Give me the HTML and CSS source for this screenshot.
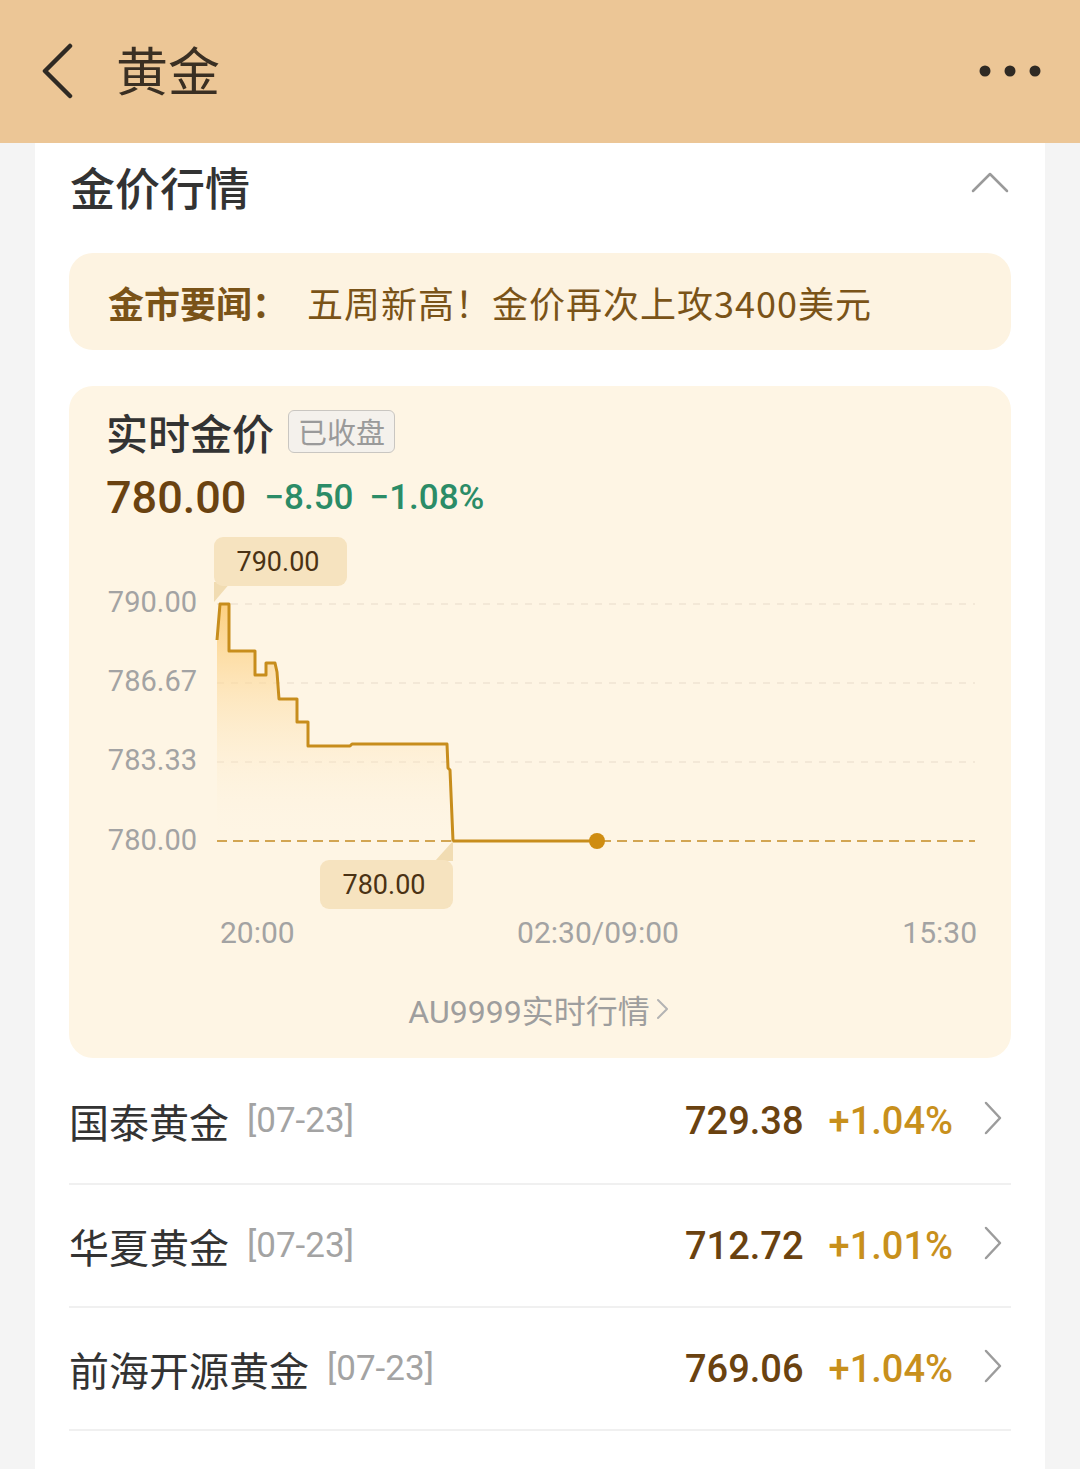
FILE: index.html
```html
<!DOCTYPE html>
<html lang="zh-CN">

<head>
    <meta charset="UTF-8">
    <meta name="viewport" content="width=device-width, initial-scale=1.0">
    <title>黄金</title>

    <link rel="stylesheet" href="styles.css">
</head>

<body>

    <header class="topbar">
        <svg class="back" width="34" height="56" viewBox="0 0 34 56">
            <path d="M30 3 L5 28 L30 53" fill="none" stroke="#2f2a24" stroke-width="4.5" stroke-linecap="round" stroke-linejoin="round" />
        </svg>
        <h1 class="page-title">黄金</h1>
        <svg class="more" width="62" height="14" viewBox="0 0 62 14">
            <circle cx="6" cy="7" r="5.5" fill="#2f2a24" />
            <circle cx="31" cy="7" r="5.5" fill="#2f2a24" />
            <circle cx="56" cy="7" r="5.5" fill="#2f2a24" />
        </svg>
    </header>

    <main class="panel">
        <div class="section-head">
            <h2 class="section-title">金价行情</h2>
            <svg class="fold" width="38" height="24" viewBox="0 0 38 24">
                <path d="M2 21 L19 4 L36 21" fill="none" stroke="#9a9a9a" stroke-width="2.5" stroke-linecap="round" stroke-linejoin="round" />
            </svg>
        </div>

        <div class="news">
            <span class="news-tag">金市要闻：</span>
            <span class="news-text">五周新高！金价再次上攻3400美元</span>
        </div>

        <div class="quote-card">
            <div class="quote-head">
                <span class="quote-title">实时金价</span>
                <span class="badge">已收盘</span>
            </div>
            <div class="quote-price">
                <span class="price">780.00</span>
                <span class="change">−8.50</span>
                <span class="change">−1.08%</span>
            </div>

            <svg class="chart" width="942" height="430" viewBox="0 0 942 430">
                <defs>
                    <linearGradient id="area" x1="0" y1="0" x2="0" y2="1">
                        <stop offset="0" stop-color="#fcc96f" stop-opacity="0.85" />
                        <stop offset="1" stop-color="#fef5e5" stop-opacity="0" />
                    </linearGradient>
                </defs>

                <!-- grid -->
                <g stroke="#efe4d2" stroke-width="1.5" stroke-dasharray="7 7">
                    <line x1="148" y1="74" x2="906" y2="74" />
                    <line x1="148" y1="153" x2="906" y2="153" />
                    <line x1="148" y1="232" x2="906" y2="232" />
                </g>
                <line x1="148" y1="311" x2="906" y2="311" stroke="#d2a552" stroke-width="2" stroke-dasharray="10 6" />

                <g class="axis-y" text-anchor="end">
                    <text x="128" y="82">790.00</text>
                    <text x="128" y="161">786.67</text>
                    <text x="128" y="240">783.33</text>
                    <text x="128" y="320">780.00</text>
                </g>

                <path d="M148,311 L148,110 L151,74 L160,74 L160,121 L186,121 L186,145 L197,145 L197,133 L206,133 L208,142 L210,169 L228,169 L228,192 L239,192 L239,216 L281,216 L283,214 L378,214 L379,238 L381,240 L384,311 Z" fill="url(#area)" />
                <path d="M148,110 L151,74 L160,74 L160,121 L186,121 L186,145 L197,145 L197,133 L206,133 L208,142 L210,169 L228,169 L228,192 L239,192 L239,216 L281,216 L283,214 L378,214 L379,238 L381,240 L384,311 L528,311" fill="none" stroke="#c78d1c" stroke-width="3" stroke-linejoin="round" />
                <circle cx="528" cy="311" r="8" fill="#cf8d12" />

                <!-- max / min tips -->
                <polygon points="145,52 162,52 145,72" fill="#f1dcb2" />
                <rect x="145" y="7" width="133" height="49" rx="9" fill="#f6e3bf" />
                <text class="tip" x="209" y="41" text-anchor="middle">790.00</text>

                <polygon points="384,311 384,331 366,331" fill="#f1dcb2" />
                <rect x="251" y="330" width="133" height="49" rx="9" fill="#f6e3bf" />
                <text class="tip" x="315" y="364" text-anchor="middle">780.00</text>

                <g class="axis-x">
                    <text x="151" y="413">20:00</text>
                    <text x="529" y="413" text-anchor="middle">02:30/09:00</text>
                    <text x="908" y="413" text-anchor="end">15:30</text>
                </g>
            </svg>

            <div class="quote-link">
                AU9999实时行情
                <svg width="14" height="24" viewBox="0 0 14 24">
                    <path d="M2 3 L11 12 L2 21" fill="none" stroke="#b3b3b3" stroke-width="2" stroke-linecap="round" stroke-linejoin="round" />
                </svg>
            </div>
        </div>

        <ul class="fund-list">
            <li class="fund">
                <span class="fund-name">国泰黄金</span>
                <span class="fund-date">[07-23]</span>
                <span class="fund-price">729.38</span>
                <span class="fund-rate">+1.04%</span>
                <svg class="arrow" width="20" height="34" viewBox="0 0 20 34">
                    <path d="M3 2 L17 17 L3 32" fill="none" stroke="#9c9c9c" stroke-width="2.5" stroke-linecap="round" stroke-linejoin="round" />
                </svg>
            </li>
            <li class="fund">
                <span class="fund-name">华夏黄金</span>
                <span class="fund-date">[07-23]</span>
                <span class="fund-price">712.72</span>
                <span class="fund-rate">+1.01%</span>
                <svg class="arrow" width="20" height="34" viewBox="0 0 20 34">
                    <path d="M3 2 L17 17 L3 32" fill="none" stroke="#9c9c9c" stroke-width="2.5" stroke-linecap="round" stroke-linejoin="round" />
                </svg>
            </li>
            <li class="fund">
                <span class="fund-name">前海开源黄金</span>
                <span class="fund-date">[07-23]</span>
                <span class="fund-price">769.06</span>
                <span class="fund-rate">+1.04%</span>
                <svg class="arrow" width="20" height="34" viewBox="0 0 20 34">
                    <path d="M3 2 L17 17 L3 32" fill="none" stroke="#9c9c9c" stroke-width="2.5" stroke-linecap="round" stroke-linejoin="round" />
                </svg>
            </li>
        </ul>
    </main>

</body>

</html>
```

FILE: styles.css
```css
body {
    margin: 0;
    background: #f4f4f4;
    font-family: Roboto, "Noto Sans CJK SC", sans-serif;
    color: #333;
}

.topbar {
    height: 143px;
    background: #ecc696;
    display: flex;
    align-items: center;
    padding: 0 39px 0 40px;
    box-sizing: border-box;
}

.back {
    margin-top: -2px;
}

.page-title {
    margin: -6px 0 0 42px;
    font-family: "Noto Sans CJK SC", sans-serif;
    font-size: 52px;
    font-weight: 400;
    color: #3a2f23;
    flex: 1;
}

.more {
    margin-top: -2px;
}

.panel {
    background: #fff;
    margin: 0 35px;
    padding: 0 34px;
    min-height: calc(100vh - 143px);
}

.section-head {
    height: 110px;
    padding-bottom: 24px;
    box-sizing: border-box;
    display: flex;
    align-items: center;
    justify-content: space-between;
}

.section-title {
    margin: 0 0 0 1px;
    font-family: "Noto Sans CJK SC", sans-serif;
    font-size: 45px;
    font-weight: 500;
    color: #333;
}

.fold {
    margin-right: 2px;
    margin-top: -8px;
}

.news {
    height: 97px;
    background: #fdf3e1;
    border-radius: 24px;
    display: flex;
    align-items: center;
    padding-left: 39px;
    font-family: "Noto Sans CJK SC", sans-serif;
    font-size: 36px;
    color: #7a5318;
}

.news-tag {
    font-weight: 700;
    margin-right: 19px;
}

.news-text {
    letter-spacing: 1px;
}

.quote-card {
    margin-top: 36px;
    background: #fef5e4;
    border-radius: 24px;
    padding-top: 20px;
}

.quote-head {
    display: flex;
    align-items: center;
    height: 50px;
    padding-left: 37px;
}

.quote-title {
    font-family: "Noto Sans CJK SC", sans-serif;
    font-size: 42px;
    font-weight: 500;
    color: #333;
}

.badge {
    margin-left: 14px;
    height: 41px;
    line-height: 41px;
    padding: 0 9px;
    border: 1.5px solid #c9c6c1;
    border-radius: 6px;
    background: #f4f1ec;
    font-family: "Noto Sans CJK SC", sans-serif;
    font-size: 29px;
    color: #9a9a9a;
}

.quote-price {
    margin-top: 8px;
    height: 66px;
    display: flex;
    align-items: center;
    padding-left: 37px;
}

.price {
    font-size: 45px;
    font-weight: 500;
    color: #6a4210;
    margin-right: 18px;
}

.change {
    font-size: 35px;
    font-weight: 500;
    color: #2b8c67;
    margin-right: 16px;
}

.chart {
    display: block;
}

.axis-y text,
.axis-x text {
    font-family: Roboto, sans-serif;
    font-size: 29px;
    fill: #a3a3a3;
}

.axis-x text {
    font-size: 30px;
}

.tip {
    font-family: Roboto, sans-serif;
    font-size: 27px;
    fill: #4a3214;
}

.quote-link {
    height: 98px;
    display: flex;
    align-items: center;
    justify-content: center;
    gap: 6px;
    font-family: Roboto, "Noto Sans CJK SC", sans-serif;
    font-size: 32px;
    color: #9e9e9e;
    padding-right: 2px;
}

.fund-list {
    list-style: none;
    margin: 0;
    padding: 0;
}

.fund {
    height: 121px;
    display: flex;
    align-items: center;
    border-bottom: 2px solid #f0f0f0;
}

.fund:first-child {
    height: 125px;
}

.fund-name {
    font-family: "Noto Sans CJK SC", sans-serif;
    font-size: 40px;
    color: #333;
    margin-right: 18px;
}

.fund-date {
    font-size: 35px;
    color: #a3a3a3;
    flex: 1;
}

.fund-price {
    font-size: 38px;
    font-weight: 500;
    color: #6a4210;
    margin-right: 25px;
}

.fund-rate {
    font-size: 38px;
    font-weight: 500;
    color: #c8901c;
    margin-right: 30px;
}

.arrow {
    margin-right: 8px;
    margin-top: -6px;
}
```
